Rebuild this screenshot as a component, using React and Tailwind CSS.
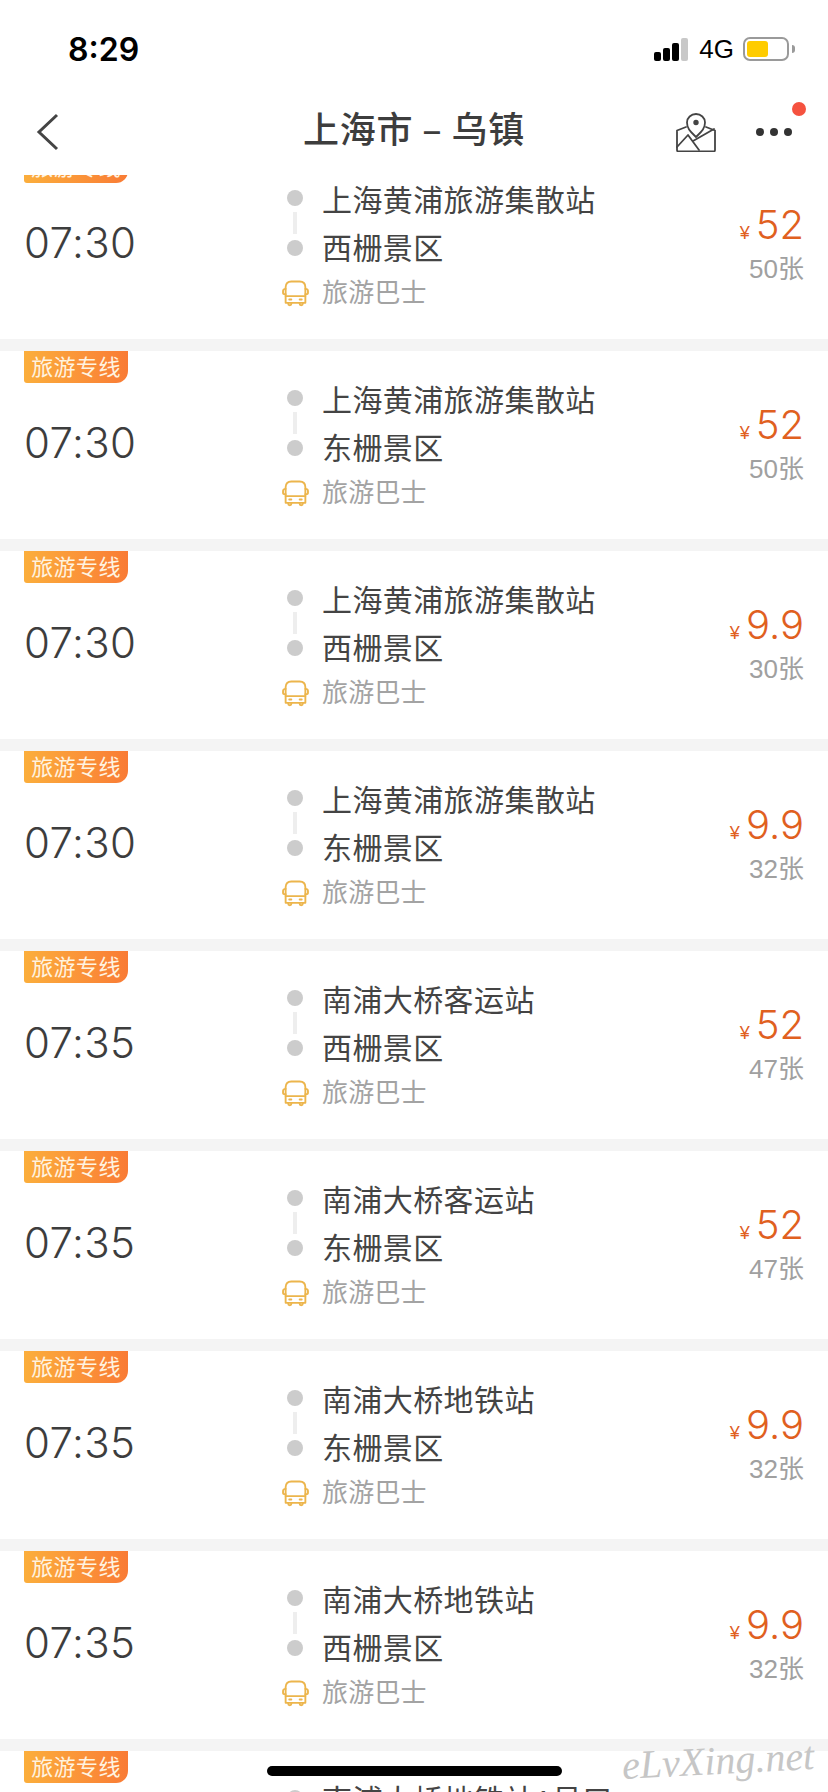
import React from 'react';

const FONT = "font-['Liberation_Sans','Noto_Sans_CJK_SC',sans-serif]";

const rows = [
  { time: '07:30', from: '上海黄浦旅游集散站', to: '西栅景区', price: '52', left: '50张' },
  { time: '07:30', from: '上海黄浦旅游集散站', to: '东栅景区', price: '52', left: '50张' },
  { time: '07:30', from: '上海黄浦旅游集散站', to: '西栅景区', price: '9.9', left: '30张' },
  { time: '07:30', from: '上海黄浦旅游集散站', to: '东栅景区', price: '9.9', left: '32张' },
  { time: '07:35', from: '南浦大桥客运站', to: '西栅景区', price: '52', left: '47张' },
  { time: '07:35', from: '南浦大桥客运站', to: '东栅景区', price: '52', left: '47张' },
  { time: '07:35', from: '南浦大桥地铁站', to: '东栅景区', price: '9.9', left: '32张' },
  { time: '07:35', from: '南浦大桥地铁站', to: '西栅景区', price: '9.9', left: '32张' },
  { time: '07:35', from: '南浦大桥地铁站1号口', to: '西栅景区', price: '9.9', left: '32张' },
];

const BusIcon = () => (
  <svg width="27" height="27" viewBox="0 0 26 26" fill="none" stroke="#ecb54c" strokeWidth="1.800" strokeLinejoin="round" strokeLinecap="round">
    <path d="M3.500 7C3.500 3 5.500 1.500 9 1.500h8c3.500 0 5.500 1.500 5.500 5.500v15h-19z" />
    <path d="M3.500 15.500h19" />
    <path d="M3.500 8.500C2 8.500 1 9.500 1 10.500v2c0 .8.800 1.200 2.500 1.200M22.500 8.500c1.500 0 2.500 1 2.500 2v2c0 .8-.800 1.200-2.500 1.200" />
    <path d="M7 18.800h2M17 18.800h2" />
    <path d="M6 22v.8a1.500 1.500 0 0 0 3 0V22M17 22v.8a1.500 1.500 0 0 0 3 0V22" />
  </svg>
);

const MapIcon = () => (
  <svg width="40" height="39" viewBox="0 0 40 39" fill="none" stroke="#444" strokeWidth="1.800" strokeLinejoin="round" strokeLinecap="round">
    <path d="M20 24c-5-5-9-8-9-14.500a9 8.500 0 0 1 18 0C29 16 25 19 20 24z" />
    <circle cx="20" cy="9.500" r="1.800" fill="#444" />
    <path d="M10 14L1 17.500V37a1.500 1.500 0 0 0 1.500 1.500h35A1.500 1.500 0 0 0 39 37V17.500L30 14" />
    <path d="M1 34l11-12 11 15M17 28l21-12" />
  </svg>
);

const Ticket = ({ row }) => (
  <div className="relative flex h-[188px] bg-white">
    <div className="absolute left-6 top-0 flex h-8 w-[104px] items-center justify-center rounded-bl-[3px] rounded-br-[12px] bg-gradient-to-r from-[#fbae3c] to-[#f97b35] text-[22px] tracking-[0.4px] text-[#fff3e0]">
      旅游专线
    </div>
    <div className="flex w-[281px] items-center pb-1.5 pl-6 font-['Inter',sans-serif] text-[42px] font-light tracking-[0.4px] text-[#3d3d3d]">{row.time}</div>
    <div className="flex-1 pt-6">
      <div className="flex h-24">
        <div className="flex w-7 flex-col items-center justify-center gap-1.5">
          <div className="h-4 w-4 rounded-full bg-[#cccccc]" />
          <div className="h-[22px] w-1 bg-[#eeeeee]" />
          <div className="h-4 w-4 rounded-full bg-[#cccccc]" />
        </div>
        <div className="ml-[13px] pt-0.5 text-[30px] leading-[48px] tracking-[0.4px] text-[#444444]">
          <div>{row.from}</div>
          <div>{row.to}</div>
        </div>
      </div>
      <div className="mt-0.5 flex h-10 items-center">
        <div className="flex w-7 justify-center"><BusIcon /></div>
        <div className="ml-[13px] text-[26px] tracking-[0.2px] text-[#a3a3a3]">旅游巴士</div>
      </div>
    </div>
    <div className="flex flex-col items-end pr-6 pt-[50px]">
      <div className="flex h-12 items-center font-['Inter',sans-serif] text-[40px] font-light text-[#e0601f]">
        <span className="mr-1.5 mt-4 font-['Liberation_Sans',sans-serif] text-[18px] font-normal">¥</span>
        {row.price}
      </div>
      <div className="mt-0.5 flex h-9 items-center text-[26px] text-[#a0a0a0]">{row.left}</div>
    </div>
  </div>
);

export default function App() {
  return (
    <div className={`relative h-[1792px] w-[828px] overflow-hidden bg-white ${FONT}`}>
      <div className="relative z-10 h-[175px] bg-white">
        <div className="flex h-[100px] items-start justify-between pl-[68px] pr-[33px] pt-[30px]">
          <div className="font-['Inter',sans-serif] text-[32px] font-semibold leading-10 text-black">8:29</div>
          <div className="flex items-center pt-[7px]">
            <div className="flex h-[23px] items-end gap-[2px]">
              <div className="h-[9px] w-[7px] rounded-[2px] bg-black" />
              <div className="h-[13px] w-[7px] rounded-[2px] bg-black" />
              <div className="h-[18px] w-[7px] rounded-[2px] bg-black" />
              <div className="h-[23px] w-[7px] rounded-[2px] bg-[#c8c8c8]" />
            </div>
            <div className="ml-[11px] text-[26px] leading-6 text-black">4G</div>
            <div className="ml-[9px] h-6 w-[46px] rounded-[7px] border-2 border-[#9a9a9a] p-[2px]">
              <div className="h-full w-[21px] rounded-[3px] bg-[#ffcc00]" />
            </div>
            <div className="ml-[3px] h-2 w-[3px] rounded-r-full bg-[#9a9a9a]" />
          </div>
        </div>
        <div className="relative flex h-[75px] items-start justify-center">
          <svg className="absolute left-9 top-[13px]" width="24" height="38" viewBox="0 0 24 38" fill="none" stroke="#444" strokeWidth="3">
            <path d="M21 2L3 19l18 17" />
          </svg>
          <div className="mt-[7px] font-['Noto_Sans_CJK_SC',sans-serif] text-[36px] font-medium leading-10 tracking-[0.8px] text-[#3d3d3d]">上海市 – 乌镇</div>
          <div className="absolute left-[676px] top-[13px]"><MapIcon /></div>
          <div className="absolute left-[756px] top-7 flex gap-1.5">
            <div className="h-2 w-2 rounded-full bg-[#333333]" />
            <div className="h-2 w-2 rounded-full bg-[#333333]" />
            <div className="h-2 w-2 rounded-full bg-[#333333]" />
          </div>
          <div className="absolute left-[792px] top-[2px] h-3.5 w-3.5 rounded-full bg-[#f5523f]" />
        </div>
      </div>
      <div className="-mt-6 flex flex-col gap-3 bg-[#f4f4f4]">
        {rows.map((row, i) => <Ticket key={i} row={row} />)}
      </div>
      <div className="absolute left-[622px] top-[1731px] -rotate-3 font-['Liberation_Serif',serif] text-[40px] italic text-[#c6c6c6]">
        eLvXing.net
      </div>
      <div className="absolute left-[267px] top-[1766px] h-2.5 w-[295px] rounded-full bg-black" />
    </div>
  );
}
